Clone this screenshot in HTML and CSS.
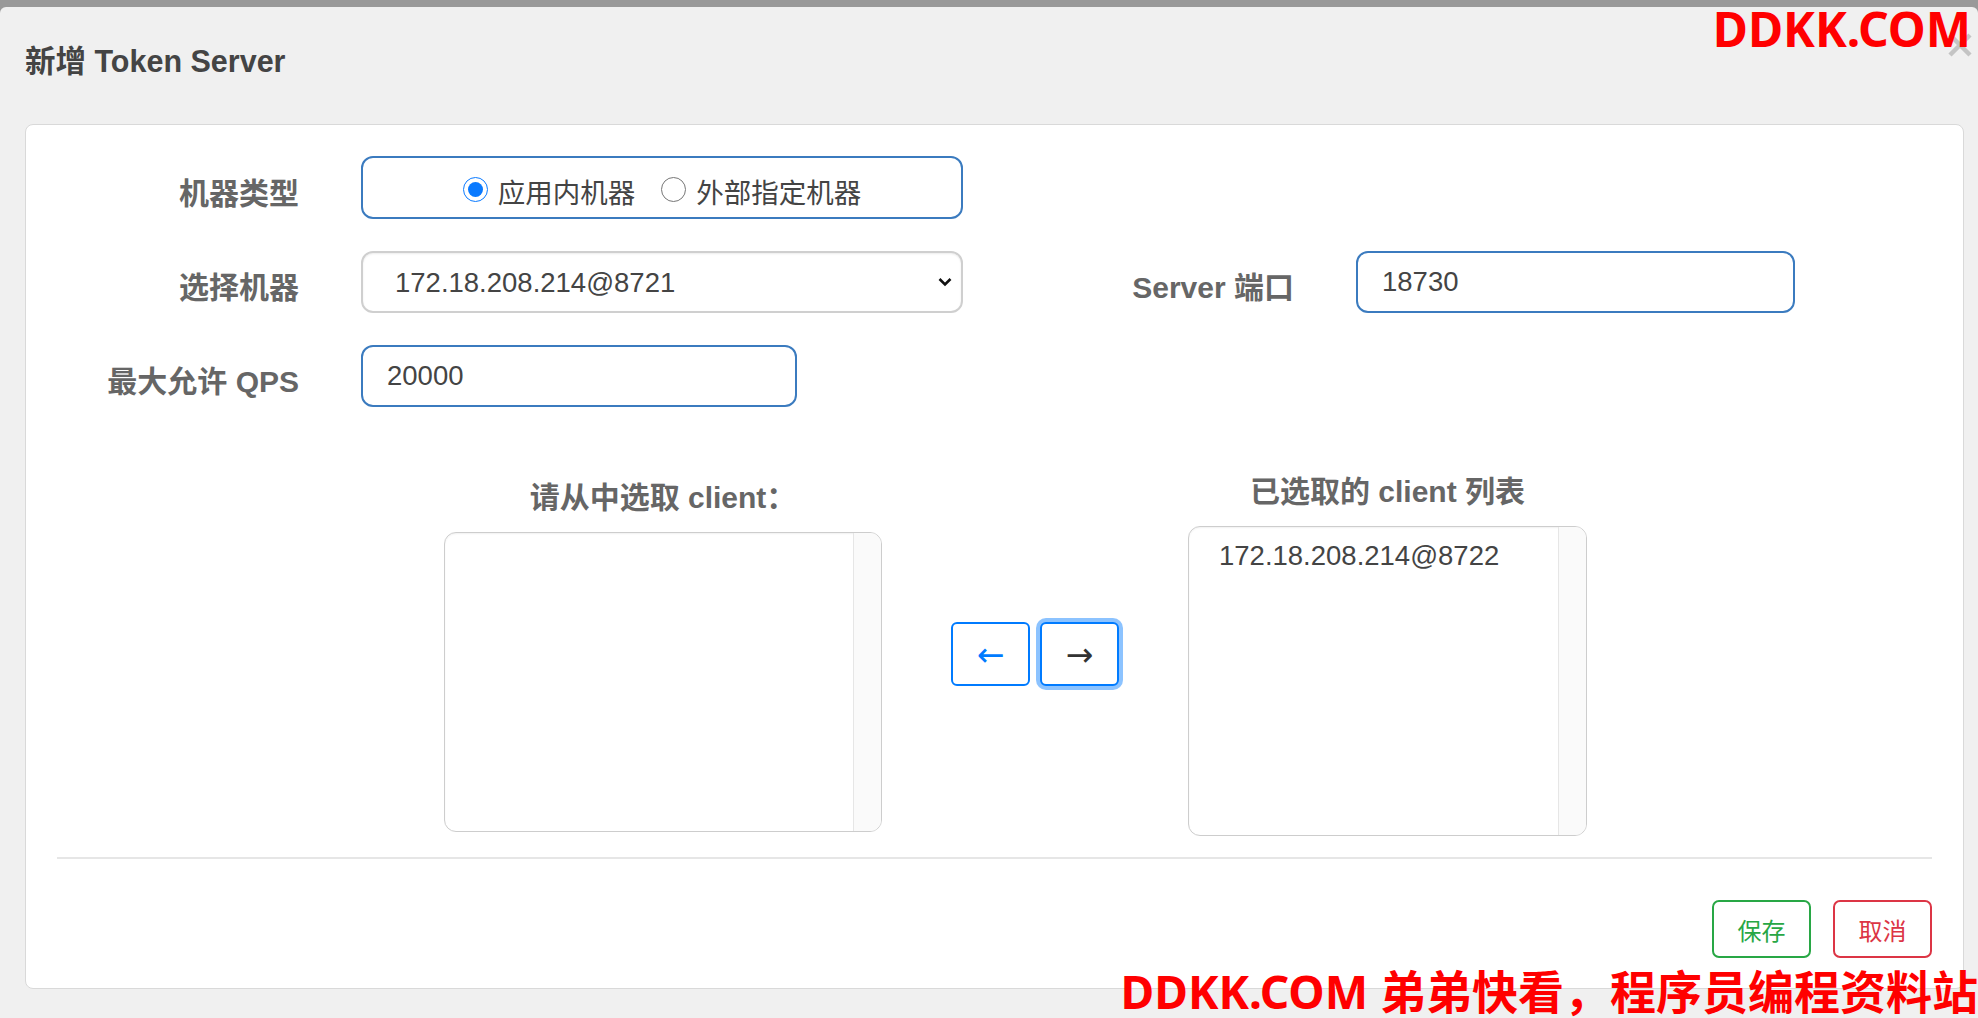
FILE: index.html
```html
<!DOCTYPE html>
<html lang="zh-CN">

<head>
    <meta charset="UTF-8">
    <meta name="viewport" content="width=device-width, initial-scale=1.0">
    <title>新增 Token Server</title>
    <link rel="stylesheet" href="styles.css">
</head>

<body>
    <div class="modal">
        <div class="modal-header">
            <h4 class="modal-title">新增 Token Server</h4>
            <button class="close-button" type="button" aria-label="关闭">
                <svg viewBox="0 0 26 26" width="26" height="26">
                    <path d="M3 3 L23 23 M23 3 L3 23" stroke="#c4c4c4" stroke-width="4.5" stroke-linecap="butt" />
                </svg>
            </button>
        </div>

        <div class="modal-body">
            <form class="panel">
                <div class="form-grid">
                    <label class="field-label">机器类型</label>
                    <div class="radio-group">
                        <label class="radio-option"><input type="radio" name="mode" checked>应用内机器</label>
                        <label class="radio-option"><input type="radio" name="mode">外部指定机器</label>
                    </div>

                    <label class="field-label">选择机器</label>
                    <div class="select-wrap">
                        <select class="machine-select">
                            <option>172.18.208.214@8721</option>
                        </select>
                        <svg class="select-arrow" viewBox="0 0 14 10" width="14" height="10">
                            <path d="M1.5 2 L7 7.5 L12.5 2" fill="none" stroke="#111" stroke-width="2.6" />
                        </svg>
                    </div>
                    <label class="field-label port-label">Server 端口</label>
                    <input class="text-input" type="text" value="18730">

                    <label class="field-label">最大允许 QPS</label>
                    <input class="text-input qps-input" type="text" value="20000">
                </div>

                <div class="client-section">
                    <div class="client-column left-column">
                        <h5 class="client-title">请从中选取 client：</h5>
                        <div class="client-list left-list">
                            <ul class="client-items"></ul>
                            <div class="client-track"></div>
                        </div>
                    </div>

                    <div class="transfer">
                        <button class="transfer-button" type="button">←</button>
                        <button class="transfer-button is-focused" type="button">→</button>
                    </div>

                    <div class="client-column">
                        <h5 class="client-title">已选取的 client 列表</h5>
                        <div class="client-list right-list">
                            <ul class="client-items">
                                <li>172.18.208.214@8722</li>
                            </ul>
                            <div class="client-track"></div>
                        </div>
                    </div>
                </div>

                <hr class="divider">

                <div class="form-actions">
                    <button class="action-button save-button" type="button">保存</button>
                    <button class="action-button cancel-button" type="button">取消</button>
                </div>
            </form>
        </div>
    </div>

    <div class="watermark watermark-top">DDKK.COM</div>
    <div class="watermark watermark-bottom">DDKK.COM 弟弟快看，程序员编程资料站</div>
</body>

</html>
```

FILE: styles.css
```css
* {
    box-sizing: border-box;
}

html,
body {
    margin: 0;
}

body {
    background-color: #999;
    font-family: "Liberation Sans", "Noto Sans CJK SC", sans-serif;
    color: #444;
    overflow: hidden;
}

.modal {
    position: relative;
    margin-top: 7px;
    min-height: 1011px;
    background-color: #f0f0f0;
    border-radius: 6px 6px 0 0;
}

.modal-header {
    position: relative;
    padding: 34px 25px 43px;
}

.modal-title {
    margin: 0;
    font-size: 30.5px;
    line-height: 40px;
    font-weight: bold;
    color: #444;
}

.close-button {
    position: absolute;
    top: 25px;
    right: 5px;
    padding: 0;
    border: none;
    background: none;
}

.close-button svg {
    display: block;
}

.modal-body {
    padding: 0 14px 0 25px;
}

.panel {
    display: block;
    background-color: #fff;
    border: 1px solid #d9d9d9;
    border-radius: 8px;
    padding: 31px 31px 30px;
}

/* top form rows */
.form-grid {
    display: grid;
    grid-template-columns: 237px 602px 269px 439px;
    grid-template-rows: 63px 62px 62px;
    column-gap: 62px;
    row-gap: 32px;
    margin-left: 5px;
}

.field-label {
    grid-column: 1;
    align-self: center;
    padding-top: 6px;
    text-align: right;
    font-size: 30px;
    font-weight: bold;
    color: #666;
    white-space: nowrap;
}

.port-label {
    grid-column: 3;
}

.radio-group {
    display: flex;
    justify-content: center;
    align-items: center;
    gap: 26px;
    padding-top: 6px;
    border: 2px solid #3b7bbf;
    border-radius: 12px;
    font-size: 27.5px;
    color: #444;
}

.radio-option {
    display: flex;
    align-items: center;
    gap: 10px;
}

.radio-option input {
    width: 25px;
    height: 25px;
    margin: 0 0 2px;
    accent-color: #0a7aff;
}

.select-wrap {
    position: relative;
}

.machine-select {
    width: 100%;
    height: 100%;
    appearance: none;
    -webkit-appearance: none;
    padding: 0 40px 0 32px;
    border: 2px solid #cfcfcf;
    border-radius: 12px;
    background-color: #fff;
    box-shadow: inset 0 1px 2px rgba(0, 0, 0, 0.08);
    font-family: inherit;
    font-size: 27.5px;
    color: #444;
}

.select-arrow {
    position: absolute;
    top: 50%;
    right: 11px;
    margin-top: -5px;
    pointer-events: none;
}

.text-input {
    width: 100%;
    height: 100%;
    padding: 0 0 0 24px;
    border: 2px solid #3b7bbf;
    border-radius: 12px;
    font-family: inherit;
    font-size: 27.5px;
    color: #444;
    outline: none;
}

.qps-input {
    width: 436px;
}

/* client picker */
.client-section {
    display: flex;
    align-items: center;
    gap: 69px;
    margin: 65px 0 0 387px;
}

.client-column {
    align-self: flex-start;
}

.left-column {
    padding-top: 6px;
}

.client-title {
    margin: 0 0 14px;
    font-size: 30px;
    line-height: 40px;
    font-weight: bold;
    color: #666;
    text-align: center;
    white-space: nowrap;
}

.client-list {
    display: flex;
    overflow: hidden;
    background-color: #fff;
    border: 1.5px solid #cdcdcd;
    border-radius: 12px;
    box-shadow: inset 0 1px 2px rgba(0, 0, 0, 0.06);
}

.left-list {
    width: 438px;
    height: 300px;
}

.right-list {
    width: 399px;
    height: 310px;
}

.client-items {
    flex: 1;
    margin: 0;
    padding: 12px 0 0 30px;
    list-style: none;
    font-size: 27.5px;
    line-height: 34px;
    color: #444;
}

.client-track {
    width: 28px;
    background-color: #fafafa;
    border-left: 1px solid #e6e6e6;
}

.transfer {
    display: flex;
    gap: 10px;
}

.transfer-button {
    width: 79px;
    height: 64px;
    padding: 0;
    background-color: #fff;
    border: 2px solid #007bff;
    border-radius: 6px;
    font-family: "DejaVu Sans", sans-serif;
    font-size: 33px;
    line-height: 1;
    color: #007bff;
}

.transfer-button.is-focused {
    color: #333;
    box-shadow: 0 0 0 4px rgba(0, 123, 255, 0.45);
}

.divider {
    margin: 21px 0 0;
    border: none;
    border-top: 2px solid #e6e6e6;
}

.form-actions {
    display: flex;
    justify-content: flex-end;
    gap: 22px;
    margin-top: 41px;
}

.action-button {
    width: 99px;
    height: 58px;
    padding: 0;
    background-color: #fff;
    border: 2px solid;
    border-radius: 7px;
    font-family: inherit;
    font-size: 24px;
}

.save-button {
    color: #28a745;
    border-color: #28a745;
}

.cancel-button {
    color: #dc3545;
    border-color: #dc3545;
}

.watermark {
    position: absolute;
    color: #f00;
    font-family: "Noto Sans", "Noto Sans CJK SC", sans-serif;
    font-weight: bold;
    white-space: nowrap;
}

.watermark-top {
    top: 5px;
    right: 7px;
    font-size: 48px;
    line-height: 48px;
}

.watermark-bottom {
    top: 968px;
    right: 0;
    font-size: 46px;
    line-height: 46px;
}
```
